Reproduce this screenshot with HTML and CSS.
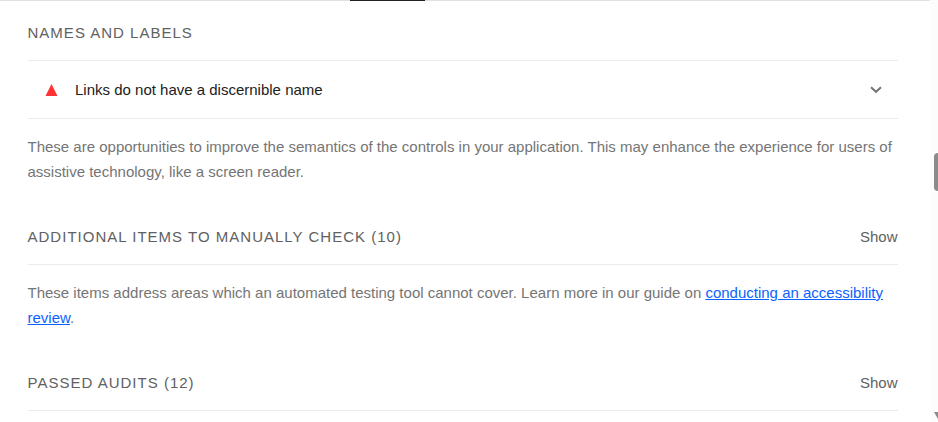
FILE: index.html
```html
<!DOCTYPE html>
<html lang="en">
<head>
<meta charset="utf-8">
<title>Accessibility audit</title>
<link rel="stylesheet" href="styles.css">
</head>
<body>
<div class="tabs"><span class="tab-active"></span></div>
<main class="report">
  <section class="group">
    <h2 class="heading first"><span>Names and labels</span></h2>
    <div class="audit">
      <svg class="fail" viewBox="0 0 12 12"><path d="M6 0 12 12H0z"/></svg>
      <span class="audit-title">Links do not have a discernible name</span>
      <svg class="chevron" viewBox="0 0 14 14"><path d="M2 4.2 7 8.8 12 4.2"/></svg>
    </div>
    <p class="description">These are opportunities to improve the semantics of the controls in your application. This may enhance the experience for users of assistive technology, like a screen reader.</p>
  </section>
  <section class="group">
    <h2 class="heading"><span>Additional items to manually check (10)</span><span class="show">Show</span></h2>
    <p class="description">These items address areas which an automated testing tool cannot cover. Learn more in our guide on <a href="#">conducting an accessibility review</a>.</p>
  </section>
  <section class="group">
    <h2 class="heading"><span>Passed audits (12)</span><span class="show">Show</span></h2>
  </section>
</main>
<div class="scrollbar">
  <div class="thumb"></div>
  <svg class="arrow" viewBox="0 0 8 8"><path d="M0 0H8L4 7z"/></svg>
</div>
</body>
</html>
```
FILE: styles.css
```css
* { box-sizing: border-box; }
body {
  margin: 0;
  height: 422px;
  overflow: hidden;
  position: relative;
  background: #fff;
  color: #757575;
  font: 15px/25px "Liberation Sans", Arial, sans-serif;
}
.tabs { height: 1px; width: 930px; padding-left: 350px; background: #e0e0e0; }
.tab-active { display: block; width: 75px; height: 1px; background: #212121; }
.report { width: 898px; padding-left: 27.5px; }
.heading {
  display: flex;
  justify-content: space-between;
  height: 56px;
  margin: 0;
  padding-top: 15px;
  border-bottom: 1px solid #ebebeb;
  color: #616161;
  font-size: 15px;
  font-weight: 400;
  line-height: 25px;
  letter-spacing: 1.01px;
  text-transform: uppercase;
}
.first { height: 60px; padding-top: 19px; }
.show { margin-right: 0.5px; letter-spacing: 0; text-transform: none; }
.audit {
  display: flex;
  align-items: center;
  height: 58px;
  padding: 0 15.5px 0 17.5px;
  border-bottom: 1px solid #ebebeb;
  color: #212121;
}
.fail { width: 13px; height: 12px; margin-right: 17px; fill: #f33; }
.chevron { width: 14px; height: 14px; margin-left: auto; fill: none; stroke: #757575; stroke-width: 2; }
.description { height: 90px; margin: 0; padding-top: 15px; }
.description a { color: #0b62ff; text-decoration: underline; }
.scrollbar { position: absolute; top: 0; right: 0; width: 8px; height: 422px; background: #fcfcfc; }
.thumb { margin: 153px 0 0 4px; width: 4px; height: 38px; border-radius: 4px 0 0 4px; background: #8b8b8b; }
.arrow { position: absolute; left: 4px; top: 412px; width: 8px; height: 8px; fill: #8b8b8b; }
```
